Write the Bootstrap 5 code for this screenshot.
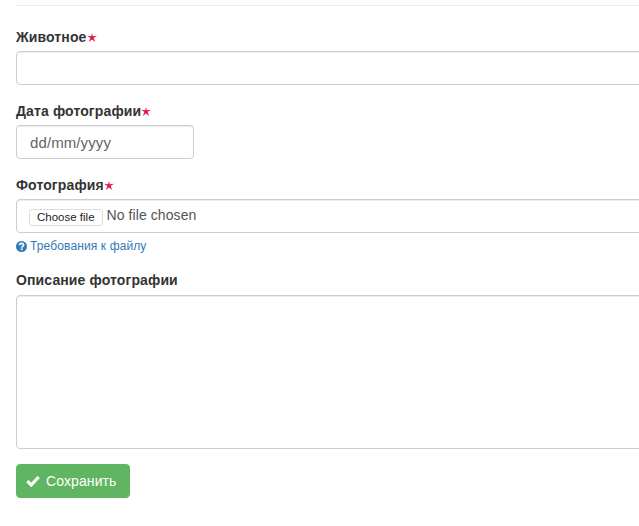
<!DOCTYPE html>
<html lang="ru">
<head>
<meta charset="utf-8">
<title>Фотография</title>
<link rel="stylesheet" href="https://cdn.jsdelivr.net/npm/bootstrap@5.3.0/dist/css/bootstrap.min.css">
<style>
html, body { overflow: hidden; height: 526px; }
body { font-family: "Liberation Sans", Arial, sans-serif; font-size: 14px; line-height: 20px; color: #333; background: #fff; }
.page-wrap { width: 680px; padding: 5px 0 0 16px; }
.top-rule { margin: 0 0 20px; border: 0; border-top: 1px solid #eee; opacity: 1; }
.field { margin-bottom: 15px; }
.field-label { display: block; font-weight: 700; font-size: 14px; line-height: 22px; margin-bottom: 3px; color: #333; letter-spacing: .12px; height: 22px; }
.field-label.plain-label { line-height: 20px; height: 20px; margin-bottom: 5px; }
.req { display: inline-block; width: 10px; height: 9px; vertical-align: 0; }
.form-control.ctl { height: 34px; padding: 6px 13px; font-size: 14px; line-height: 20px; color: #555; border: 1px solid #ccc; border-radius: 4px; box-shadow: inset 0 1px 1px rgba(0,0,0,.075); }
.form-control.ctl-date { width: 178px; color: #666; font-size: 15px; letter-spacing: .1px; }
.form-control.ctl-file { padding: 0 12px; display: flex; align-items: center; }
.file-btn { font-family: "Liberation Sans", Arial, sans-serif; font-size: 11.5px; line-height: 13px; color: #222; background: #fff; border: 1px solid #ddd; border-radius: 3px; padding: 1px 7px; margin-top: 2px; margin-right: 4px; }
.file-name { font-size: 14px; margin-top: -3px; color: #555; letter-spacing: .08px; }
.help-line { display: flex; align-items: center; gap: 3px; margin-top: 5px; font-size: 12px; line-height: 17px; color: #337ab7; letter-spacing: .12px; }
.form-control.ctl-area { height: 154px; resize: none; }
.field-area { margin-bottom: 15px; }
.field-file { margin-bottom: 15px; }
.save-btn { display: inline-flex; align-items: center; gap: 6px; height: 34px; padding: 6px 13px 6px 9px; font-size: 14px; line-height: 20px; color: #fff; background: #5fb562; border: 1px solid #5cb85c; border-radius: 4px; letter-spacing: .1px; }
.save-btn:hover { color: #fff; background: #5fb562; }
</style>
</head>
<body>
<div class="page-wrap">
  <hr class="top-rule">
  <form>
    <div class="field">
      <label class="field-label">Животное<svg class="req" viewBox="0 0 20 18" aria-hidden="true"><path d="M10 0 11.6 6.4 20 5.6 13.2 10 16.6 18 10 12.8 3.4 18 6.8 10 0 5.6 8.4 6.4Z" fill="#e8173f"/></svg></label>
      <input type="text" class="form-control ctl">
    </div>
    <div class="field">
      <label class="field-label">Дата фотографии<svg class="req" viewBox="0 0 20 18" aria-hidden="true"><path d="M10 0 11.6 6.4 20 5.6 13.2 10 16.6 18 10 12.8 3.4 18 6.8 10 0 5.6 8.4 6.4Z" fill="#e8173f"/></svg></label>
      <input type="text" class="form-control ctl ctl-date" value="dd/mm/yyyy">
    </div>
    <div class="field field-file">
      <label class="field-label">Фотография<svg class="req" viewBox="0 0 20 18" aria-hidden="true"><path d="M10 0 11.6 6.4 20 5.6 13.2 10 16.6 18 10 12.8 3.4 18 6.8 10 0 5.6 8.4 6.4Z" fill="#e8173f"/></svg></label>
      <div class="form-control ctl ctl-file"><span class="file-btn">Choose file</span><span class="file-name">No file chosen</span></div>
      <div class="help-line">
        <svg width="11" height="11" viewBox="0 0 12 12" aria-hidden="true"><circle cx="6" cy="6" r="6" fill="#337ab7"/><path d="M3.9 4.7C3.9 3.3 5 2.6 6.1 2.6S8.3 3.4 8.3 4.5C8.3 5.9 6.2 5.8 6.2 7.3" fill="none" stroke="#fff" stroke-width="1.7"/><rect x="5.2" y="8.1" width="2" height="1.8" fill="#fff"/></svg>
        <span>Требования к файлу</span>
      </div>
    </div>
    <div class="field-area">
      <label class="field-label plain-label">Описание фотографии</label>
      <textarea class="form-control ctl ctl-area"></textarea>
    </div>
    <button type="button" class="btn save-btn">
      <svg width="14" height="12" viewBox="0 0 14 12" aria-hidden="true"><path d="M1.3 6.2 5.2 10 12.7 2" fill="none" stroke="#fff" stroke-width="3.2"/></svg>
      <span>Сохранить</span>
    </button>
  </form>
</div>
</body>
</html>
